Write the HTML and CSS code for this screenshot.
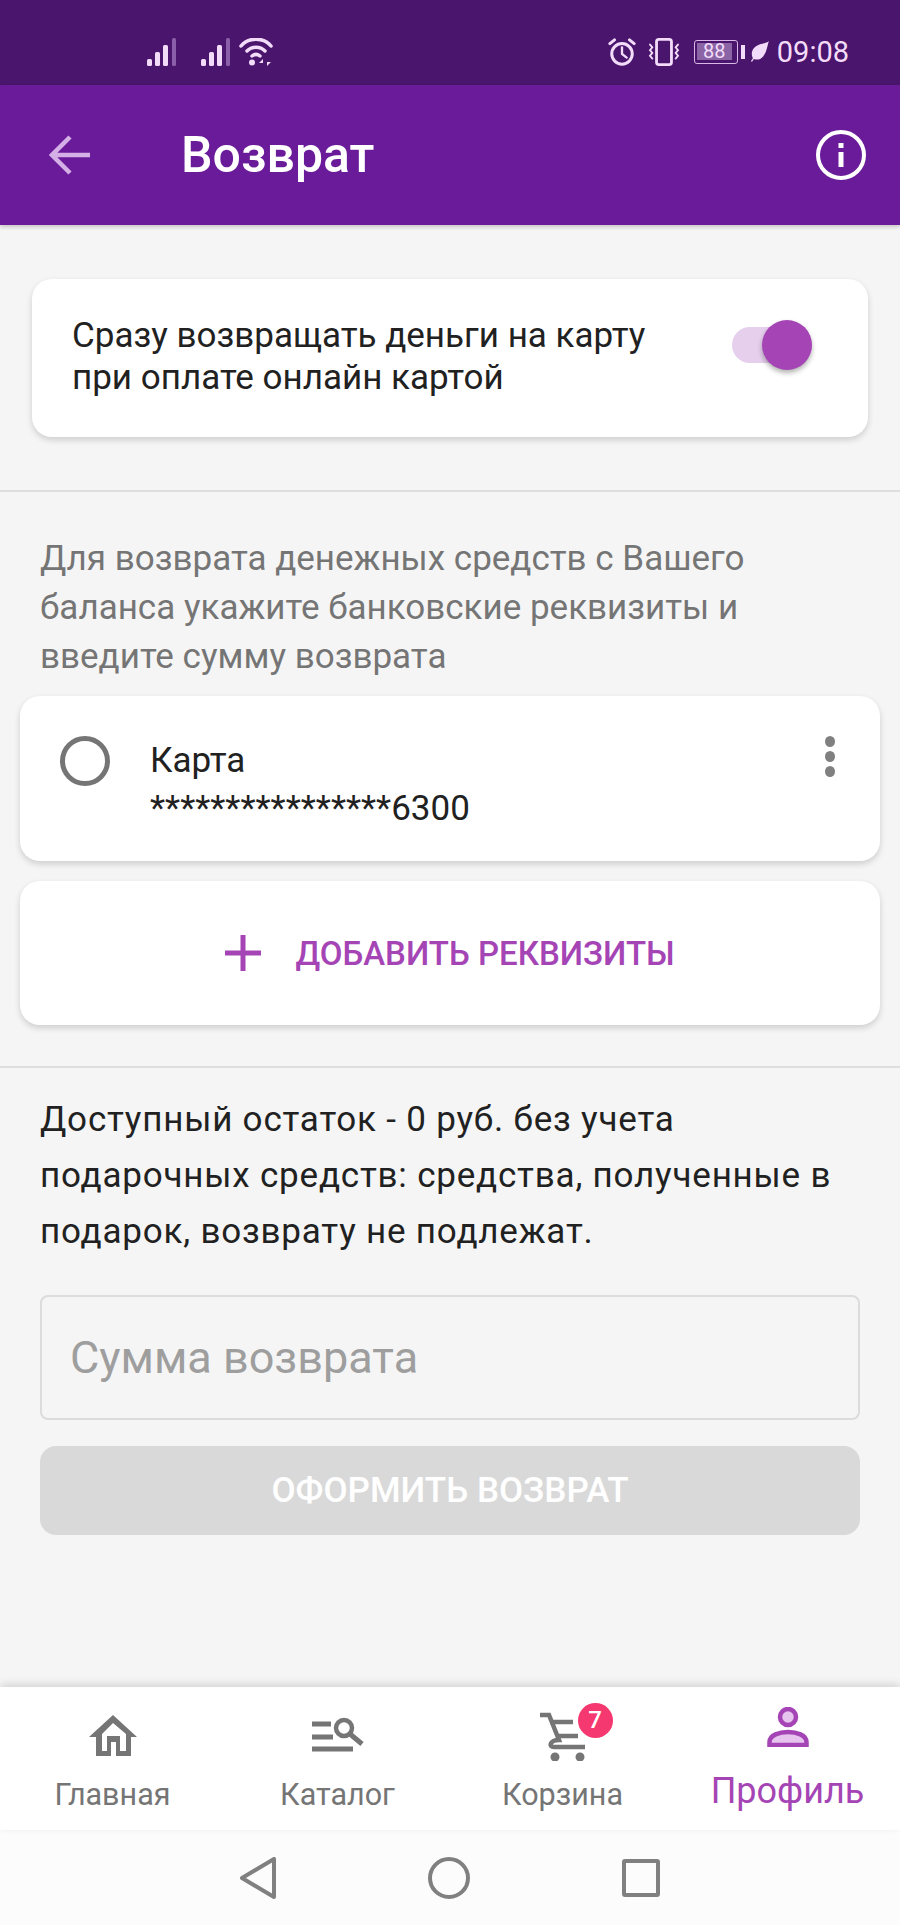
FILE: index.html
```html
<!DOCTYPE html>
<html lang="ru">
  <head>
    <meta charset="UTF-8" />
    <title>Возврат</title>
    <link rel="stylesheet" href="styles.css">
  </head>
  <body>
    <div class="phone">
      <!-- Android status bar -->
      <header class="statusBar">
        <div class="statusLeft">
          <svg class="signal" width="30" height="28" viewBox="0 0 30 28">
            <g fill="#f3dcfa"><rect x="0" y="21" width="5" height="7" rx="1.5"/><rect x="8" y="14" width="5" height="14" rx="1.5"/><rect x="16" y="7" width="5" height="21" rx="1.5"/></g>
            <rect x="25" y="0" width="4" height="28" rx="1.5" fill="#8a5ea8"/>
          </svg>
          <svg class="signal second" width="30" height="28" viewBox="0 0 30 28">
            <g fill="#f3dcfa"><rect x="0" y="21" width="5" height="7" rx="1.5"/><rect x="8" y="14" width="5" height="14" rx="1.5"/><rect x="16" y="7" width="5" height="21" rx="1.5"/></g>
            <rect x="25" y="0" width="4" height="28" rx="1.5" fill="#8a5ea8"/>
          </svg>
          <svg class="wifi" width="34" height="28" viewBox="0 0 34 28" fill="none" stroke="#f3dcfa" stroke-width="3.500" stroke-linecap="round">
            <path d="M2 8C9-1 25-1 32 8"/>
            <path d="M8 13c5-5 13-5 18 0"/>
            <path d="M13 18c2.500-2 5.500-2 8 0"/>
            <circle cx="13" cy="24.500" r="3" fill="#f3dcfa" stroke="none"/>
            <path d="M24 28v-7l-4 4h4zM28 21v7l4-4h-4z" fill="#f3dcfa" stroke="none"/>
          </svg>
        </div>
        <div class="statusRight">
          <svg width="28" height="28" viewBox="0 0 30 30" fill="none" stroke="#f3dcfa" stroke-width="3.200" stroke-linecap="round">
            <circle cx="15" cy="17" r="11"/>
            <path d="M15 10v7l5 4" stroke-width="2.500"/>
            <path d="M2 6l5-4M28 6l-5-4"/>
          </svg>
          <svg class="vibrate" width="36" height="28" viewBox="0 0 36 30" fill="none" stroke="#f3dcfa" stroke-linecap="round">
            <rect x="10" y="1.500" width="16" height="27" rx="2.500" stroke-width="3"/>
            <path d="M3 7l2.500 3-2.500 3 2.500 3-2.500 3 2.500 3M33 7l-2.500 3 2.500 3-2.500 3 2.500 3-2.500 3" stroke-width="2"/>
          </svg>
          <div class="battery">
            <div class="batteryBody"><span class="batteryLevel">88</span></div>
            <span class="batteryCap"></span>
          </div>
          <svg class="leaf" width="18" height="21" viewBox="0 0 19 22">
            <path d="M19 0C17 3 6 2 2 9c-2 4-1 7 0 9l-2 3 1 1 2-3c3 1 7 1 10-3 4-5 4-11 6-16z" fill="#f3dcfa"/>
          </svg>
          <span class="clock">09:08</span>
        </div>
      </header>

      <div class="appBar">
        <svg class="backIcon" width="42" height="40" viewBox="0 0 42 40" fill="none" stroke="#d4b0e6" stroke-width="4.500">
          <path d="M41 20H3M21 2L3 20l18 18"/>
        </svg>
        <h1 class="pageTitle">Возврат</h1>
        <svg class="infoIcon" width="50" height="50" viewBox="0 0 50 50">
          <circle cx="25" cy="25" r="23" fill="none" stroke="#fff" stroke-width="4"/>
          <rect x="22.500" y="22" width="5" height="15" fill="#fff"/>
          <rect x="22.500" y="13" width="5" height="5" fill="#fff"/>
        </svg>
      </div>

      <main class="content">
        <section class="autoRefund">
          <div class="card switchCard">
            <div class="switchText">Сразу возвращать деньги на карту<br>при оплате онлайн картой</div>
            <div class="switchTrack"><span class="switchThumb"></span></div>
          </div>
        </section>

        <section class="requisites">
          <p class="hint">Для возврата денежных средств с Вашего баланса укажите банковские реквизиты и введите сумму возврата</p>
          <div class="card payCard">
            <span class="radio"></span>
            <div class="payInfo">
              <div class="payName">Карта</div>
              <div class="payNumber">****************6300</div>
            </div>
            <div class="moreDots"><span></span><span></span><span></span></div>
          </div>
          <div class="card addCard">
            <svg width="36" height="36" viewBox="0 0 36 36"><path d="M15.500 0h5v15.500H36v5H20.500V36h-5V20.500H0v-5h15.500z" fill="#a545b5"/></svg>
            <span class="addLabel">ДОБАВИТЬ РЕКВИЗИТЫ</span>
          </div>
        </section>

        <section class="refundForm">
          <p class="balance">Доступный остаток - 0 руб. без учета подарочных средств: средства, полученные в подарок, возврату не подлежат.</p>
          <div class="amountInput">Сумма возврата</div>
          <div class="submitBtn">ОФОРМИТЬ ВОЗВРАТ</div>
        </section>
      </main>

      <nav class="tabBar">
        <div class="tab">
          <div class="iconBox">
            <svg width="48" height="41" viewBox="0 0 48 41">
              <path fill-rule="evenodd" d="M24 0L0 22h7v19h35V22h6zM24 8l13 11v17h-6V21H18v15h-5V19zM22 27h5v14h-5z" fill="#757575"/>
            </svg>
          </div>
          <span class="tabLabel">Главная</span>
        </div>
        <div class="tab">
          <div class="iconBox">
            <svg width="52" height="36" viewBox="0 0 52 36" fill="none" stroke="#757575">
              <path d="M0 7h19M0 20h21M0 32h41" stroke-width="5"/>
              <circle cx="32" cy="11" r="8" stroke-width="4.500"/>
              <path d="M38 17l12 10" stroke-width="5"/>
            </svg>
          </div>
          <span class="tabLabel">Каталог</span>
        </div>
        <div class="tab">
          <div class="iconBox">
            <div class="cartWrap">
              <svg width="46" height="49" viewBox="0 0 46 49" fill="none" stroke="#757575" stroke-width="4.500">
                <path d="M0 3h9l10 25c-9 0-11 7-5 7h31M10 10h23M16 24h22"/>
                <circle cx="15" cy="45" r="4.500" fill="#757575" stroke="none"/>
                <circle cx="40" cy="45" r="4.500" fill="#757575" stroke="none"/>
              </svg>
              <span class="cartBadge">7</span>
            </div>
          </div>
          <span class="tabLabel">Корзина</span>
        </div>
        <div class="tab tabActive">
          <div class="iconBox">
            <svg width="42" height="40" viewBox="0 0 42 40">
              <circle cx="21" cy="10" r="8" fill="#e6c4ee" stroke="#a545b5" stroke-width="4.500"/>
              <path d="M2.500 38v-3c0-7 10-10 18.500-10s18.500 3 18.500 10v3z" fill="#e6c4ee" stroke="#a545b5" stroke-width="4.500"/>
            </svg>
          </div>
          <span class="tabLabel">Профиль</span>
        </div>
      </nav>

      <footer class="systemNav">
        <svg width="36" height="42" viewBox="0 0 36 42" fill="none" stroke="#808080" stroke-width="4" stroke-linejoin="round"><path d="M34 2v38L2 21z"/></svg>
        <svg width="42" height="42" viewBox="0 0 42 42" fill="none" stroke="#808080" stroke-width="4"><circle cx="21" cy="21" r="19"/></svg>
        <svg width="38" height="38" viewBox="0 0 38 38" fill="none" stroke="#808080" stroke-width="4" stroke-linejoin="round"><rect x="2" y="2" width="34" height="34" rx="1"/></svg>
      </footer>
    </div>
  </body>
</html>
```

FILE: styles.css
```css
body {
  margin: 0;
  background: #f5f5f5;
  font-family: Roboto, sans-serif;
}

.phone {
  display: flex;
  flex-direction: column;
  width: 900px;
  height: 1925px;
  overflow: hidden;
}

.statusBar {
  display: flex;
  align-items: center;
  justify-content: space-between;
  flex: 0 0 85px;
  box-sizing: border-box;
  padding: 18px 51px 0 147px;
  background: #4a156c;
}

.statusLeft,
.statusRight {
  display: flex;
  align-items: center;
}

.signal.second {
  margin-left: 24px;
}

.wifi {
  margin-left: 8px;
}

.vibrate {
  margin-left: 10px;
}

.battery {
  display: flex;
  align-items: center;
  margin-left: 12px;
}

.batteryBody {
  box-sizing: border-box;
  width: 44px;
  height: 24px;
  padding: 2px;
  border: 1.5px solid #d9b8e8;
  border-radius: 3px;
}

.batteryLevel {
  display: block;
  width: 35px;
  height: 17px;
  background: #8a64a4;
  color: #f3dcfa;
  font-size: 20px;
  line-height: 17px;
  text-align: center;
}

.batteryCap {
  width: 4px;
  height: 14px;
  margin-left: 3px;
  background: #f3dcfa;
}

.leaf {
  margin-left: 6px;
}

.clock {
  margin-left: 8px;
  color: #f3dcfa;
  font-size: 29px;
}

.appBar {
  display: flex;
  align-items: center;
  flex: 0 0 140px;
  box-sizing: border-box;
  padding: 0 34px 0 49px;
  background: #6a1b9a;
  box-shadow: 0 2px 4px rgba(0, 0, 0, 0.2);
  position: relative;
}

.pageTitle {
  flex: 1;
  margin: 0 0 0 90px;
  color: #fff;
  font-size: 50px;
  font-weight: 500;
}

.content {
  flex: 1;
  min-height: 0;
}

.card {
  box-sizing: border-box;
  background: #fff;
  border-radius: 20px;
  box-shadow: 0 3px 6px rgba(0, 0, 0, 0.16);
}

.autoRefund {
  box-sizing: border-box;
  height: 267px;
  padding: 54px 32px 0;
  border-bottom: 2px solid #dedede;
}

.switchCard {
  display: flex;
  align-items: center;
  justify-content: space-between;
  height: 158px;
  padding: 0 56px 0 40px;
}

.switchText {
  margin-bottom: 2px;
  color: #212121;
  font-size: 35px;
  line-height: 42px;
}

.switchTrack {
  position: relative;
  width: 80px;
  height: 36px;
  margin-bottom: 26px;
  background: #e5cfec;
  border-radius: 18px;
}

.switchThumb {
  position: absolute;
  top: -7px;
  right: 0;
  width: 50px;
  height: 50px;
  background: #a545b5;
  border-radius: 50%;
  box-shadow: 0 3px 5px rgba(0, 0, 0, 0.3);
}

.requisites {
  box-sizing: border-box;
  height: 576px;
  padding: 42px 20px 0;
  border-bottom: 2px solid #dedede;
}

.hint {
  margin: 0 20px 15px;
  color: #757575;
  font-size: 35px;
  line-height: 49px;
}

.payCard {
  display: flex;
  align-items: flex-start;
  height: 165px;
  padding: 40px 45px 0 40px;
}

.radio {
  box-sizing: border-box;
  width: 50px;
  height: 50px;
  border: 5px solid #757575;
  border-radius: 50%;
}

.payInfo {
  flex: 1;
  margin: 1px 0 0 40px;
  color: #212121;
}

.payName,
.payNumber {
  font-size: 35px;
  line-height: 48px;
}

.moreDots {
  display: flex;
  flex-direction: column;
  gap: 4px;
}

.moreDots span {
  width: 10px;
  height: 11px;
  background: #808080;
  border-radius: 50%;
}

.addCard {
  display: flex;
  align-items: center;
  justify-content: center;
  gap: 34px;
  height: 144px;
  margin-top: 20px;
}

.addLabel {
  color: #a545b5;
  font-size: 33px;
  font-weight: 500;
}

.refundForm {
  padding: 24px 40px 0;
}

.balance {
  max-width: 800px;
  margin: 0;
  color: #212121;
  font-size: 35px;
  line-height: 56px;
  letter-spacing: 0.8px;
}

.amountInput {
  display: flex;
  align-items: center;
  box-sizing: border-box;
  height: 125px;
  margin-top: 35px;
  padding-left: 28px;
  border: 2px solid #dcdcdc;
  border-radius: 8px;
  color: #9e9e9e;
  font-size: 45px;
}

.submitBtn {
  height: 89px;
  margin-top: 26px;
  background: #d9d9d9;
  border-radius: 16px;
  color: #fff;
  font-size: 35px;
  font-weight: 500;
  line-height: 89px;
  text-align: center;
}

.tabBar {
  display: grid;
  grid-template-columns: repeat(4, 225px);
  flex: 0 0 143px;
  background: #fff;
  box-shadow: 0 -3px 8px rgba(0, 0, 0, 0.13);
  position: relative;
}

.tab {
  display: flex;
  flex-direction: column;
  align-items: center;
  padding-top: 18px;
}

.iconBox {
  display: flex;
  align-items: center;
  justify-content: center;
  height: 60px;
}

.tabLabel {
  margin-top: 12px;
  color: #757575;
  font-size: 30.5px;
  line-height: 36px;
}

.tabActive .iconBox {
  align-items: flex-start;
  padding-top: 2px;
  box-sizing: border-box;
}

.tabActive .tabLabel {
  margin-top: 6px;
  color: #a545b5;
  font-size: 36px;
  line-height: 40px;
}

.cartWrap {
  position: relative;
  display: flex;
  margin-top: 3px;
}

.cartBadge {
  position: absolute;
  top: -9px;
  right: -27px;
  width: 35px;
  height: 35px;
  background: #f5386f;
  border-radius: 50%;
  color: #fff;
  font-size: 24px;
  font-weight: 500;
  line-height: 35px;
  text-align: center;
}

.systemNav {
  display: flex;
  align-items: center;
  justify-content: center;
  gap: 152px;
  flex: 0 0 95px;
  background: #fcfcfc;
}
```
